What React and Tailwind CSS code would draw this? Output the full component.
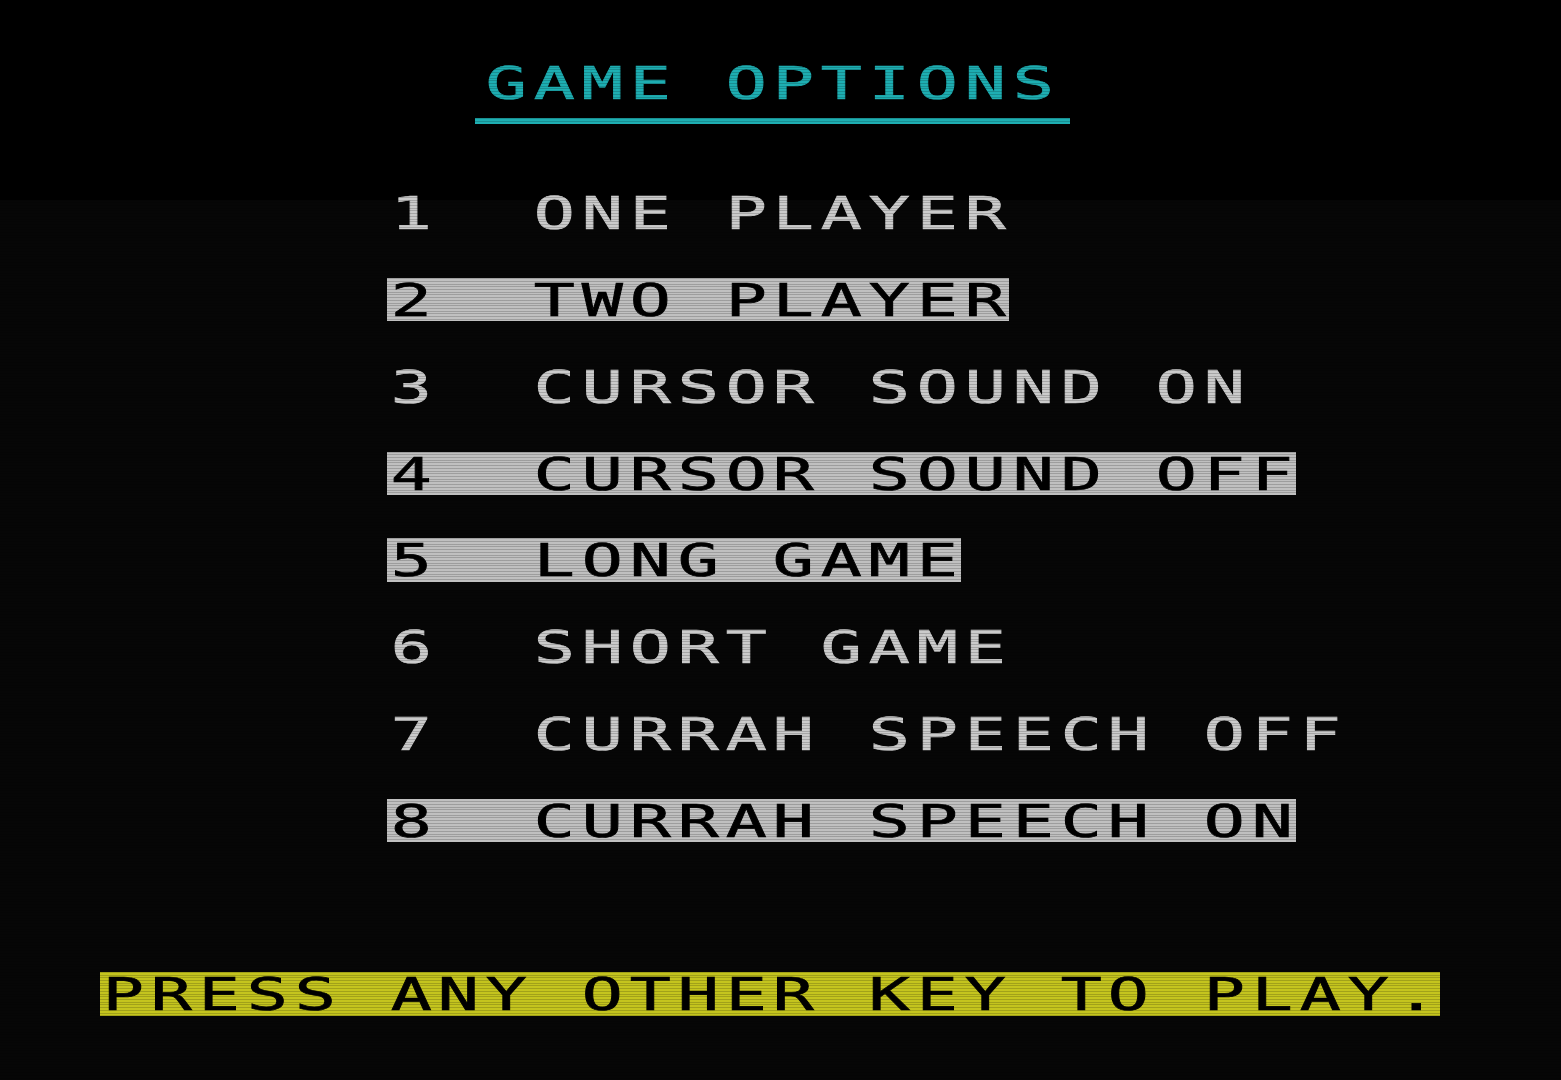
import React from 'react'

// Spectrum text screen: 32 columns x 24 rows of character cells
const rows = [
  null,
  { col: 'title', text: 'GAME OPTIONS' },
  { col: 'rule' },
  null,
  { col: 'menu', text: '1  ONE PLAYER' },
  null,
  { col: 'menu', text: '2  TWO PLAYER', paper: 'white' },
  null,
  { col: 'menu', text: '3  CURSOR SOUND ON' },
  null,
  { col: 'menu', text: '4  CURSOR SOUND OFF', paper: 'white' },
  null,
  { col: 'menu', text: '5  LONG GAME', paper: 'white' },
  null,
  { col: 'menu', text: '6  SHORT GAME' },
  null,
  { col: 'menu', text: '7  CURRAH SPEECH OFF' },
  null,
  { col: 'menu', text: '8  CURRAH SPEECH ON', paper: 'white' },
  null,
  null,
  null,
  { col: 'footer', text: 'PRESS ANY OTHER KEY TO PLAY.', paper: 'yellow' },
  null
]

const Chars = ({ text }) =>
  text.split('').map((ch, i) => (
    <span key={i} className="inline-block w-[47.86px] text-center">
      <span className="inline-block scale-x-[1.55] translate-y-[1px] [-webkit-text-stroke:0.7px_currentColor]">
        {ch === ' ' ? '\u00a0' : ch}
      </span>
    </span>
  ))

const Row = ({ row }) => {
  if (!row) return <div className="h-[43.4px]" />

  if (row.col === 'rule') {
    return (
      <div className="h-[43.4px] pt-[14px]">
        <div className="ml-[471px] w-[595px] h-[6px] bg-[#1eaeb2]" />
      </div>
    )
  }

  if (row.col === 'title') {
    return (
      <div className="h-[43.4px] flex pl-[478.6px] text-[#1eaeb2]">
        <Chars text={row.text} />
      </div>
    )
  }

  if (row.col === 'footer') {
    return (
      <div className="h-[43.4px] flex pl-[95.7px]">
        <div className="flex bg-[#c4c41e] text-black">
          <Chars text={row.text} />
        </div>
      </div>
    )
  }

  return (
    <div className="h-[43.4px] flex pl-[382.9px]">
      <div className={row.paper === 'white' ? 'flex bg-[#c0c0c0] text-black' : 'flex text-[#cbcbcb]'}>
        <Chars text={row.text} />
      </div>
    </div>
  )
}

export default function App() {
  return (
    <div className="relative w-[1561px] h-[1080px] overflow-hidden bg-[linear-gradient(to_bottom,#000_200px,#060606_200px)]">
      <div
        className="pt-[17.6px] pl-[4px] text-[44px] leading-[43.4px]"
        style={{ fontFamily: '"DejaVu Sans Mono", "Liberation Mono", monospace' }}
      >
        {rows.map((row, i) => (
          <Row key={i} row={row} />
        ))}
      </div>
      {/* scanlines */}
      <div className="pointer-events-none absolute inset-0 bg-[repeating-linear-gradient(to_bottom,transparent_0px,transparent_1.7px,rgba(0,0,0,0.18)_1.7px,rgba(0,0,0,0.18)_2.71px)]" />
    </div>
  )
}
